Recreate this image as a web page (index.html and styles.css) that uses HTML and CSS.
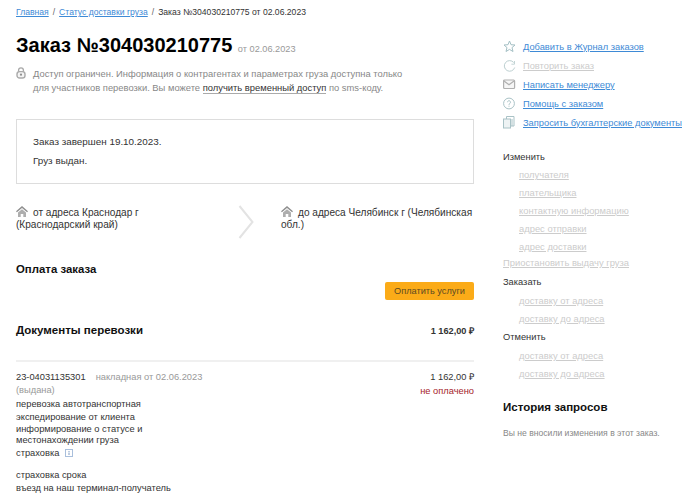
FILE: index.html
```html
<!DOCTYPE html>
<html lang="ru">
<head>
<meta charset="utf-8">
<title>Заказ №304030210775</title>
<link rel="stylesheet" href="styles.css">
</head>
<body>
<div class="page">
  <main class="main">
    <nav class="crumbs"><a href="#">Главная</a><span class="sep">/</span><a href="#">Статус доставки груза</a><span class="sep">/</span><span>Заказ №304030210775 от 02.06.2023</span></nav>
    <h1 class="title">Заказ №304030210775 <small>от 02.06.2023</small></h1>
    <div class="notice">
      <svg class="lock" width="10" height="12" viewBox="0 0 10 12" fill="none"><path d="M2.600 5V3.200a2.400 2.400 0 0 1 4.800 0V5" stroke="#a8a8a8" stroke-width="1.300"/><rect x="1" y="4.600" width="8" height="6.400" rx="2.600" stroke="#aaa" stroke-width="1.400" fill="#f4f4f4"/><circle cx="5" cy="7.700" r="1.100" fill="#8e8e8e"/></svg>
      <p>Доступ ограничен. Информация о контрагентах и параметрах груза доступна только<br>для участников перевозки. Вы можете <a href="#">получить временный доступ</a> по sms-коду.</p>
    </div>
    <section class="status">
      <p>Заказ завершен 19.10.2023.</p>
      <p>Груз выдан.</p>
    </section>
    <div class="route">
      <div class="addr"><svg class="home" width="12" height="11" viewBox="0 0 12 11"><path d="M6 0 0 5.300l.9 1L6 1.900l5.100 4.400.9-1z" fill="#8f8f8f"/><path d="M2 6.600 6 3.200l4 3.400V11H7.300V8H4.700v3H2z" fill="#aeaeae"/></svg>от адреса Краснодар г (Краснодарский край)</div>
      <svg class="chevron" width="16" height="34" viewBox="0 0 16 34" fill="none"><path d="M1.500 1 14.500 17 1.500 33" stroke="#e3e3e3" stroke-width="2"/></svg>
      <div class="addr wide"><svg class="home" width="12" height="11" viewBox="0 0 12 11"><path d="M6 0 0 5.300l.9 1L6 1.900l5.100 4.400.9-1z" fill="#8f8f8f"/><path d="M2 6.600 6 3.200l4 3.400V11H7.300V8H4.700v3H2z" fill="#aeaeae"/></svg>до адреса Челябинск г (Челябинская обл.)</div>
    </div>
    <h2 class="pay-title">Оплата заказа</h2>
    <div class="pay-row"><button class="pay-btn" type="button">Оплатить услуги</button></div>
    <div class="docs-head"><h2>Документы перевозки</h2><b>1 162,00 ₽</b></div>
    <div class="doc">
      <div class="doc-info">
        <div class="doc-id"><span>23-04031135301</span><span class="muted">накладная от 02.06.2023</span></div>
        <div class="muted doc-state">(выдана)</div>
        <ul class="services">
          <li>перевозка автотранспортная</li>
          <li>экспедирование от клиента</li>
          <li class="tight">информирование о статусе и местонахождении груза</li>
          <li>страховка <svg class="info" width="8" height="8" viewBox="0 0 8 8" fill="none"><rect x=".5" y=".5" width="7" height="7" stroke="#a9bfdc"/><path d="M4 2v1M4 3.500V6" stroke="#7f9cc4"/></svg></li>
          <li class="gap">страховка срока</li>
          <li>въезд на наш терминал-получатель</li>
        </ul>
      </div>
      <div class="doc-sum"><div class="sum">1 162,00 ₽</div><div class="unpaid">не оплачено</div></div>
    </div>
  </main>
  <aside class="side">
    <ul class="actions">
      <li><svg width="13" height="13" viewBox="0 0 13 13" fill="none" stroke="#a3bfc4"><path d="M6.500 1 8 4.700l4 .3-3 2.600 1 3.900-3.500-2.100L3 11.500l1-3.900L1 5l4-.3z"/></svg><a href="#">Добавить в Журнал заказов</a></li>
      <li><svg width="13" height="13" viewBox="0 0 13 13" fill="none" stroke="#bccfd0"><path d="M11.700 8.500a5.300 5.300 0 1 1-1-5"/><path d="M11.500 2v3.200H8.400" stroke-width=".9"/></svg><a class="off-link" href="#">Повторить заказ</a></li>
      <li><svg width="13" height="13" viewBox="0 0 13 13" fill="none" stroke="#b0b0b0" stroke-width="1.200"><rect x=".6" y="2" width="11" height="8.500" rx="1" fill="#f6f6f6"/><path d="m1 3 5 3.800L11 3"/></svg><a href="#">Написать менеджеру</a></li>
      <li><svg width="13" height="13" viewBox="0 0 13 13" fill="none" stroke="#a9c2c6"><circle cx="6" cy="6.500" r="5.400"/><path d="M4.500 5.200a1.500 1.500 0 1 1 2.300 1.300c-.5.300-.8.600-.8 1.300M6 8.700v1"/></svg><a href="#">Помощь с заказом</a></li>
      <li><svg width="13" height="13" viewBox="0 0 13 13" fill="none" stroke="#a9c2c6"><rect x=".5" y="3" width="7" height="9" fill="#eef3f4"/><path d="M3.500 3V.5h7.500v9.500H7.500M9 3v7"/></svg><a href="#">Запросить бухгалтерские документы</a></li>
    </ul>
    <div class="menu">
      <div class="menu-label first">Изменить</div>
      <a class="sub" href="#">получателя</a>
      <a class="sub" href="#">плательщика</a>
      <a class="sub" href="#">контактную информацию</a>
      <a class="sub" href="#">адрес отправки</a>
      <a class="sub" href="#">адрес доставки</a>
      <a class="stop" href="#">Приостановить выдачу груза</a>
      <div class="menu-label">Заказать</div>
      <a class="sub" href="#">доставку от адреса</a>
      <a class="sub" href="#">доставку до адреса</a>
      <div class="menu-label">Отменить</div>
      <a class="sub" href="#">доставку от адреса</a>
      <a class="sub" href="#">доставку до адреса</a>
    </div>
    <h2 class="hist">История запросов</h2>
    <p class="hist-note">Вы не вносили изменения в этот заказ.</p>
  </aside>
</div>
</body>
</html>
```
FILE: styles.css
```css
* { box-sizing: border-box; }
html, body { margin: 0; padding: 0; height: 503px; overflow: hidden; background: #fff; }
body { font: 9.3px/12px "Liberation Sans", Arial, sans-serif; color: #333; }
p, ul, h1, h2 { margin: 0; padding: 0; font-weight: normal; }
ul { list-style: none; }
.page { display: flex; align-items: flex-start; padding: 6px 0 0 16px; }
.main { width: 458px; flex: none; }
.side { width: 197px; flex: none; margin-left: 29px; padding-top: 31px; }
.crumbs { font-size: 8.6px; line-height: 12px; color: #333; }
.crumbs a { color: #3e8ad6; text-decoration: underline; }
.sep { margin: 0 4px; color: #666; }
.title { margin-top: 14px; font-size: 20px; line-height: 26px; font-weight: bold; color: #000; }
.title small { font-size: 9.2px; font-weight: normal; color: #999; }
.notice { display: flex; gap: 7px; margin-top: 5px; font-size: 9.4px; line-height: 14px; color: #888; white-space: nowrap; }
.lock { flex: none; margin-top: 0; }
.notice a { color: #333; text-decoration: none; border-bottom: 1px solid #aaa; }
.status { margin-top: 24px; height: 65px; padding: 16px 16px 0; border: 1px solid #ddd; font-size: 9.9px; line-height: 12px; }
.status p + p { margin-top: 7px; }
.route { display: flex; margin-top: 21px; height: 34px; font-size: 10.1px; line-height: 12px; }
.addr { width: 190px; padding-top: 1px; flex: none; }
.addr.wide { width: 193px; }
.home { margin-right: 5px; vertical-align: -1px; }
.chevron { flex: none; margin: 0 27px 0 32px; }
.pay-title { margin-top: 23px; font-size: 11.4px; line-height: 14px; font-weight: bold; color: #111; }
.pay-row { display: flex; justify-content: flex-end; margin-top: 6px; }
.pay-btn { width: 89px; height: 18px; padding: 0; border: 0; border-radius: 2px; background: #fbab18; color: #5c4a22; font: 9.2px/18px "Liberation Sans", Arial, sans-serif; }
.docs-head { display: flex; justify-content: space-between; align-items: baseline; margin-top: 23px; border-bottom: 2px solid #f0f0f0; padding-bottom: 18px; height: 39px; }
.docs-head h2 { font-size: 11.5px; line-height: 14px; font-weight: bold; color: #111; }
.docs-head b { font-size: 9.2px; }
.doc { display: flex; justify-content: space-between; padding-top: 9px; }
.doc-info { width: 170px; }
.doc-id { white-space: nowrap; font-size: 9.3px; line-height: 12px; }
.doc-id .muted { margin-left: 10px; }
.muted { color: #999; }
.doc-state { font-size: 9.3px; margin-top: 1px; line-height: 13px; }
.services { margin-top: 1px; font-size: 9.3px; line-height: 12px; }
.services li { margin-bottom: 1px; }
.services li.tight { line-height: 11px; }
.services li.gap { margin-top: 10px; }
.info { margin-left: 3px; vertical-align: -1px; }
.doc-sum { text-align: right; font-size: 9.3px; }
.sum { line-height: 12px; }
.unpaid { color: #a5232b; font-size: 9.3px; margin-top: 2px; line-height: 12px; }
.actions li { display: flex; align-items: center; gap: 7px; height: 19px; font-size: 9.3px; white-space: nowrap; }
.actions svg { flex: none; }
.actions a { color: #3e8ad6; text-decoration: underline; }
.actions a.off-link { color: #ccc; }
.menu { margin-top: 16px; font-size: 9.3px; }
.menu-label { height: 19px; line-height: 19px; color: #333; }
.menu-label.first { height: 18px; line-height: 18px; }
.menu a { display: block; color: #ccc; text-decoration: underline; }
.sub { height: 18px; line-height: 18px; padding-left: 16px; font-size: 9.4px; }
.stop { height: 17px; line-height: 14px; font-size: 9.4px; }
.hist { margin-top: 17px; font-size: 11.5px; line-height: 14px; font-weight: bold; color: #111; }
.hist-note { margin-top: 13px; font-size: 8.6px; line-height: 12px; color: #888; }
```
